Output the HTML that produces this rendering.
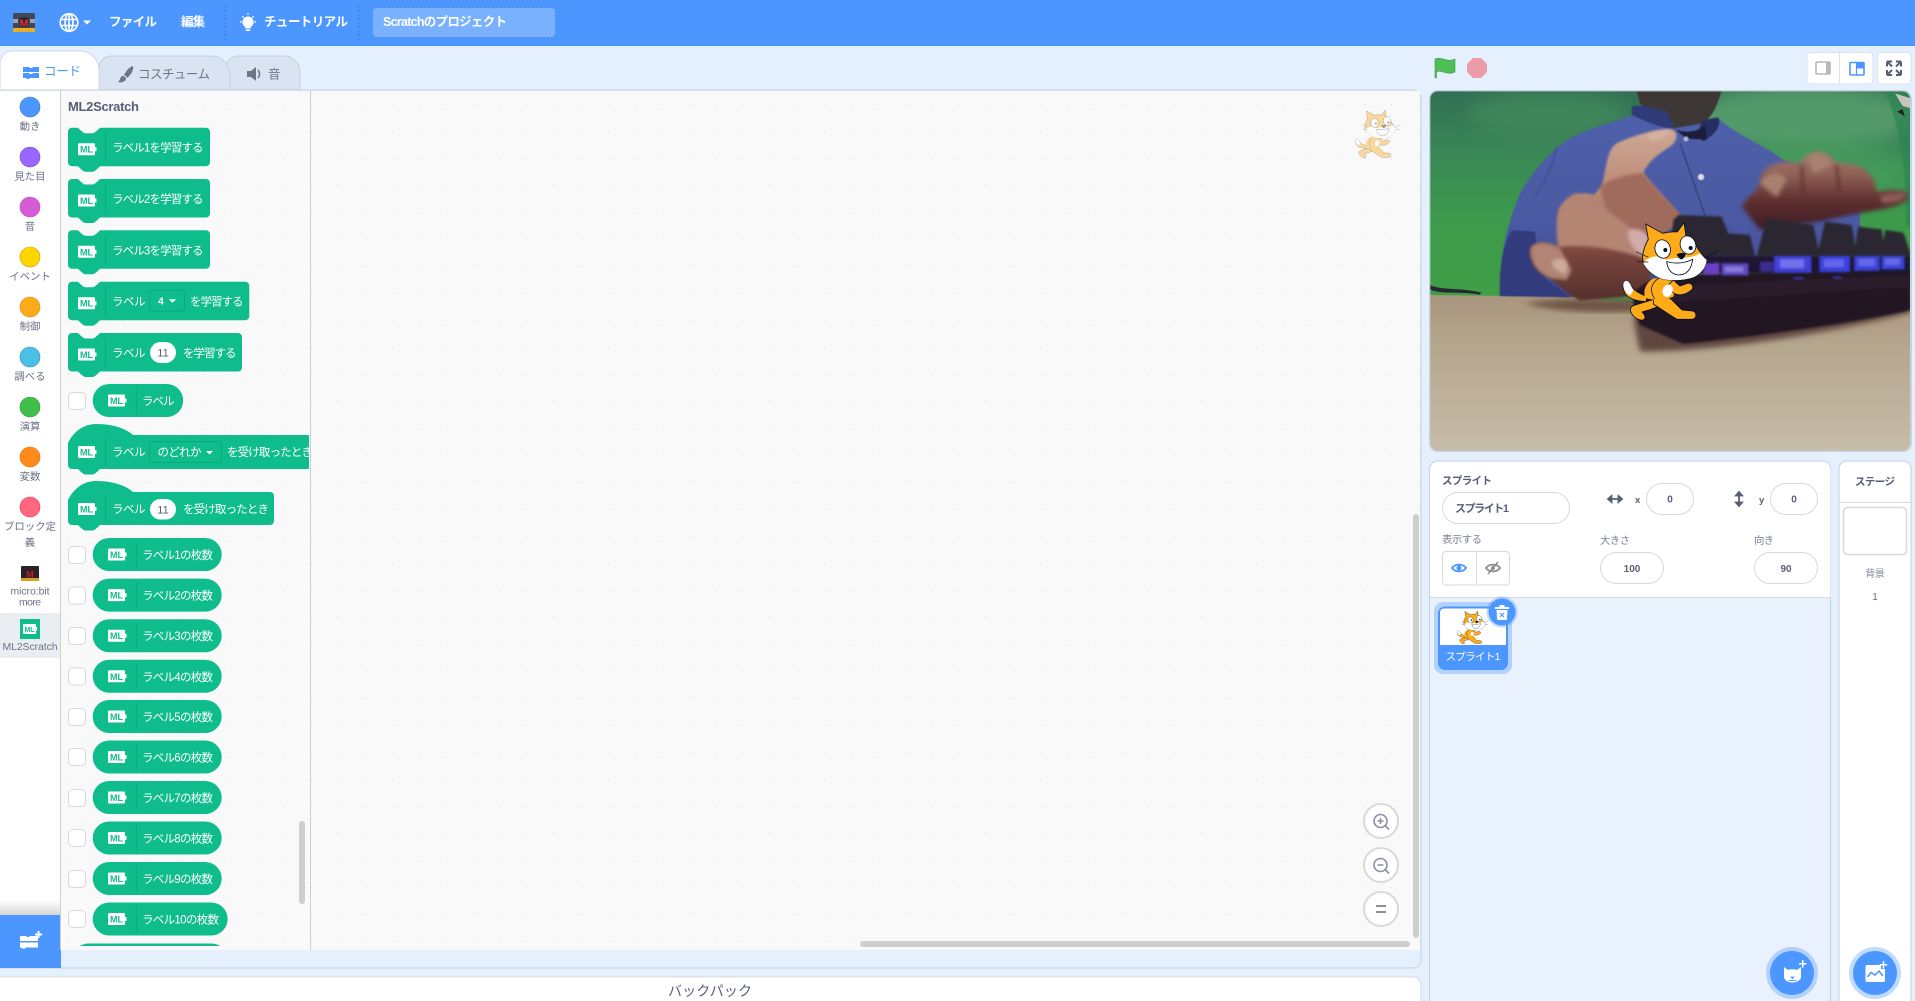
<!DOCTYPE html>
<html lang="ja"><head><meta charset="utf-8"><title>ML2Scratch</title>
<style>
html,body{margin:0;padding:0;width:1915px;height:1001px;overflow:hidden;background:#e5f0ff}
svg{display:block}
text{font-family:"Liberation Sans","Noto Sans CJK JP",sans-serif}
.w{fill:#fff;font-size:11.5px}
.ml{fill:#0fbd8c;font-size:9px;font-weight:700}
.c{fill:#6b7186;font-size:10.4px;text-anchor:middle}
.g{fill:#575e75;font-size:10.4px}
.inp{fill:#fff;stroke:#d9d9d9;stroke-width:1}
.n{fill:#575e75;font-size:10px;font-weight:700;text-anchor:middle}
.r{fill:#0fbd8c}
.s{stroke:#0ca87c;stroke-width:1}
.box{fill:#fff;stroke:#d9d9d9;stroke-width:1}
</style></head><body>
<svg width="1915" height="1001" viewBox="0 0 1915 1001" xmlns="http://www.w3.org/2000/svg">
<defs>
<pattern id="dots" width="27" height="27" patternUnits="userSpaceOnUse" x="1" y="10"><rect x="13" y="13" width="1.2" height="1.2" fill="#e2e2e2"/></pattern>
<linearGradient id="shade" x1="0" y1="0" x2="0" y2="1"><stop offset="0" stop-color="#fff"/><stop offset="1" stop-color="#d6d6d6"/></linearGradient>
<g id="cat">
<path d="M70 250C75 238 85 240 92 255C100 272 120 282 142 290L138 305C110 303 85 295 75 280C70 270 68 260 70 250Z" fill="#ffab19" stroke="#001026" stroke-width="2.500"/>
<path d="M70 250C75 238 85 240 92 255L100 272L90 287C76 278 68 265 70 250Z" fill="#fff"/>
<path d="M185 290C160 300 125 308 98 318C88 323 90 336 98 345C108 358 128 366 134 356C138 346 126 336 126 336C145 330 178 322 200 308Z" fill="#ffab19" stroke="#001026" stroke-width="2.500"/>
<path d="M160 296C180 280 205 288 218 302L246 330L278 333C292 337 291 357 275 358L232 358C215 350 185 328 160 312Z" fill="#ffab19" stroke="#001026" stroke-width="2.500"/>
<path d="M160 235C140 248 128 268 135 292C150 302 195 302 220 290C228 268 228 248 218 235Z" fill="#ffab19"/>
<path d="M220 240L240 258L262 250C278 248 284 264 272 272C255 285 235 288 222 280L202 258Z" fill="#ffab19" stroke="#001026" stroke-width="2.500"/>
<path d="M176 235C156 248 146 270 164 296" fill="none" stroke="#001026" stroke-width="2.200"/>
<ellipse cx="203" cy="272" rx="15" ry="19" fill="#fff" transform="rotate(20 203 272)"/>
<path d="M137 72L188 100Q212 94 232 96L252 68L258 108Q285 125 296 150L320 180Q316 215 280 232Q240 245 190 238Q150 225 130 190Q122 160 145 118Z" fill="#ffab19" stroke="#001026" stroke-width="2.500"/>
<path d="M130 190C140 172 172 160 200 180C225 168 275 180 298 160L320 180Q316 215 280 232Q240 245 190 238Q150 225 130 190Z" fill="#fff"/>
<ellipse cx="188" cy="147" rx="23" ry="28" fill="#fff" stroke="#001026" stroke-width="2.500" transform="rotate(-15 188 147)"/>
<ellipse cx="264" cy="135" rx="23" ry="28" fill="#fff" stroke="#001026" stroke-width="2.500" transform="rotate(-20 264 135)"/>
<circle cx="196" cy="150" r="6" fill="#001026"/><circle cx="272" cy="144" r="6" fill="#001026"/>
<path d="M230 163Q245 155 258 162Q250 180 243 178Q235 175 230 163Z" fill="#001026"/>
<path d="M200 185Q240 196 278 178Q272 225 235 225Q205 222 200 185Z" fill="#fff" stroke="#001026" stroke-width="2.500"/>
<path d="M108 155L145 172M112 185L145 186M320 170L350 155M320 188L345 189" stroke="#001026" stroke-width="2" fill="none"/>
</g>
<filter id="bl0" x="-5%" y="-5%" width="110%" height="110%"><feGaussianBlur stdDeviation="1.500"/></filter>
<filter id="bl" x="-5%" y="-5%" width="110%" height="110%"><feGaussianBlur stdDeviation="3"/></filter>
<filter id="bl4" x="-5%" y="-5%" width="110%" height="110%"><feGaussianBlur stdDeviation="5"/></filter>
<filter id="bl1" x="-10%" y="-10%" width="120%" height="120%"><feGaussianBlur stdDeviation="6"/></filter>
<filter id="bl2" x="-10%" y="-10%" width="120%" height="120%"><feGaussianBlur stdDeviation="9"/></filter>
<filter id="bl3" x="-30%" y="-30%" width="160%" height="160%"><feGaussianBlur stdDeviation="28"/></filter>
<linearGradient id="gBg" gradientUnits="userSpaceOnUse" x1="0" y1="152" x2="0" y2="780"><stop offset="0" stop-color="#326f54"/><stop offset=".3" stop-color="#3a8757"/><stop offset=".6" stop-color="#3d9a4c"/><stop offset="1" stop-color="#409e46"/></linearGradient>
<linearGradient id="gTb" gradientUnits="userSpaceOnUse" x1="0" y1="765" x2="0" y2="1234"><stop offset="0" stop-color="#a8957d"/><stop offset=".35" stop-color="#b6a78f"/><stop offset="1" stop-color="#c7bca9"/></linearGradient>
<linearGradient id="gSh" gradientUnits="userSpaceOnUse" x1="0" y1="220" x2="0" y2="770"><stop offset="0" stop-color="#4f5fa9"/><stop offset=".6" stop-color="#4b5aa3"/><stop offset="1" stop-color="#3c4887"/></linearGradient>
<linearGradient id="gH" gradientUnits="userSpaceOnUse" x1="0" y1="270" x2="0" y2="780"><stop offset="0" stop-color="#cfa794"/><stop offset=".3" stop-color="#bd8f7a"/><stop offset=".55" stop-color="#a87363"/><stop offset=".72" stop-color="#7b463e"/><stop offset="1" stop-color="#55302c"/></linearGradient>
<linearGradient id="gR" gradientUnits="userSpaceOnUse" x1="0" y1="320" x2="0" y2="570"><stop offset="0" stop-color="#ab8476"/><stop offset=".35" stop-color="#8d5e54"/><stop offset=".65" stop-color="#5f2e2f"/><stop offset="1" stop-color="#3d1e26"/></linearGradient>
<clipPath id="stageClip"><rect x="29" y="152" width="1443" height="1082" rx="24"/></clipPath>
<clipPath id="palClip"><rect x="61" y="91" width="248" height="855"/></clipPath>
</defs>

<rect width="1915" height="1001" fill="#e5f0ff"/>

<!-- header -->
<rect width="1915" height="46" fill="#4c97ff"/>
<g>
<rect x="13" y="13" width="22" height="19" rx="2" fill="#414858"/>
<rect x="13" y="28" width="22" height="4" fill="#e8b022"/>
<rect x="13" y="19" width="5" height="4" fill="#9aa2b3"/><rect x="30" y="19" width="5" height="4" fill="#9aa2b3"/>
<rect x="19.500" y="17.500" width="9" height="9.500" fill="#20242e"/>
<text x="24" y="26.500" text-anchor="middle" font-size="10.500" font-weight="700" fill="#ef2b34">M</text>
</g>
<g fill="none" stroke="#fff" stroke-width="1.600">
<circle cx="69" cy="22.500" r="8.800"/><ellipse cx="69" cy="22.500" rx="4" ry="8.800"/><path d="M69 14V31M60.500 19.500H77.500M60.500 25.500H77.500"/>
</g>
<path d="M83 20.500H91L87 24.500Z" fill="#fff"/>
<text x="109" y="26" fill="#fff" font-size="12.500" font-weight="700" textLength="48">ファイル</text>
<text x="181" y="26" fill="#fff" font-size="12.500" font-weight="700" textLength="24">編集</text>
<path d="M225 6V40M359 6V40" stroke="#3373cc" stroke-width="1" stroke-dasharray="2 2" opacity=".7"/>
<g fill="#fff">
<path d="M248 16.500a5.600 5.600 0 0 1 3.400 10c-.8.700-1 1.300-1 2h-4.800c0-.7-.2-1.300-1-2a5.600 5.600 0 0 1 3.400-10z"/><rect x="245.500" y="29.500" width="5" height="1.500" rx=".7"/>
<path d="M248 12.800v1.800M240 22h1.800M254.200 22h1.800M242.300 16.300l1.300 1.300M253.700 16.300l-1.300 1.300" stroke="#fff" stroke-width="1.200"/>
</g>
<text x="264" y="26" fill="#fff" font-size="12.500" font-weight="700" textLength="84">チュートリアル</text>
<rect x="372.500" y="7.500" width="183" height="30" rx="4" fill="#fff" fill-opacity=".25" stroke="#3373cc" stroke-opacity=".6" stroke-dasharray="2 2"/>
<text x="383" y="26" fill="#fff" font-size="12.500" font-weight="700" textLength="124">Scratchのプロジェクト</text>

<!-- tabs -->
<path d="M226 90V68a12 12 0 0 1 12-12h46a16 16 0 0 1 16 16v18z" fill="#d9e3f2" stroke="#c4cfdf"/>
<path d="M99 90V68a12 12 0 0 1 12-12h100a19 19 0 0 1 19 19v15z" fill="#d9e3f2" stroke="#c4cfdf"/>
<path d="M0 91V63a12 12 0 0 1 12-12h68a19 19 0 0 1 19 19v21z" fill="#fff" stroke="#d0d9e6"/>
<g fill="#4c97ff"><path d="M23 67h6l1 1h2l1-1h6v5H23zM23 73h6l1 1h2l1-1h6v5h-9l-1 1h-2l-1-1h-3z"/></g>
<text x="44" y="75.500" fill="#4c97ff" font-size="12.500" textLength="37">コード</text>
<path d="M133 66c-4 1-7 5-9 9 2 1 3 2 3 3 4-3 7-8 6-12zM118 82c3 1 7 0 8-3 0-2-2-3-4-3-2 1-2 5-4 6z" fill="#6f7585"/>
<text x="138" y="78.500" fill="#6f7585" font-size="12.500" textLength="72">コスチューム</text>
<path d="M247 71h4l5-4v14l-5-4h-4z" fill="#6f7585"/><path d="M258 70c2 2 2 6 0 8" fill="none" stroke="#6f7585" stroke-width="1.500"/>
<text x="268" y="78.500" fill="#6f7585" font-size="12.500" textLength="12.500">音</text>

<!-- code panel -->
<path d="M-5 90H1413a8 8 0 0 1 8 8V960a8 8 0 0 1-8 8H-5z" fill="#e5f0ff" stroke="#c4cfdf"/>
<rect x="0" y="91" width="60" height="824" fill="#fff"/>
<rect x="0" y="900" width="60" height="15" fill="url(#shade)"/>
<rect x="0" y="915" width="61" height="53" fill="#4c97ff"/>
<rect x="61" y="91" width="1359" height="859" fill="#f9f9f9"/>
<rect x="61" y="91" width="1359" height="859" fill="url(#dots)"/>
<path d="M60.500 91V950M310.500 91V950" stroke="#cfcfcf"/>
<g fill="#fff"><path d="M20 936h6l1 1h2l1-1h8v5H20zM20 942.500h18v5H26l-1 1h-3l-1-1h-1z"/><path d="M37.500 931h2v2.500H42v2h-2.500V938h-2v-2.500H35v-2h2.500z"/></g>

<!-- categories -->
<circle cx="30" cy="107" r="10" fill="#4c97ff" stroke="#3373cc" stroke-width=".6"/><text class="c" x="30" y="130">動き</text>
<circle cx="30" cy="157" r="10" fill="#9966ff" stroke="#774dcb" stroke-width=".6"/><text class="c" x="30" y="180">見た目</text>
<circle cx="30" cy="207" r="10" fill="#d65cd6" stroke="#bd42bd" stroke-width=".6"/><text class="c" x="30" y="230">音</text>
<circle cx="30" cy="257" r="10" fill="#ffd500" stroke="#cc9900" stroke-width=".6"/><text class="c" x="30" y="280">イベント</text>
<circle cx="30" cy="307" r="10" fill="#ffab19" stroke="#cf8b17" stroke-width=".6"/><text class="c" x="30" y="330">制御</text>
<circle cx="30" cy="357" r="10" fill="#4cbfe6" stroke="#2e8eb8" stroke-width=".6"/><text class="c" x="30" y="380">調べる</text>
<circle cx="30" cy="407" r="10" fill="#40bf4a" stroke="#389438" stroke-width=".6"/><text class="c" x="30" y="430">演算</text>
<circle cx="30" cy="457" r="10" fill="#ff8c1a" stroke="#db6e00" stroke-width=".6"/><text class="c" x="30" y="480">変数</text>
<circle cx="30" cy="507" r="10" fill="#ff6680" stroke="#ff3355" stroke-width=".6"/><text class="c" x="30" y="530" textLength="52">ブロック定</text><text class="c" x="30" y="546">義</text>
<g>
<rect x="21" y="566" width="18" height="15" rx="1" fill="#2a2226"/><rect x="21" y="578" width="18" height="3" fill="#d8a22a"/>
<text x="30" y="577.500" text-anchor="middle" font-size="9" font-weight="700" fill="#c8202a">M</text>
</g>
<text class="c" x="30" y="594.500" textLength="39">micro:bit</text><text class="c" x="30" y="605.500" textLength="22">more</text>
<rect x="0" y="613" width="60" height="45" fill="#e9eef2"/>
<rect x="20" y="619" width="20" height="20" fill="#0fbd8c"/>
<g transform="translate(23,624)"><rect width="13" height="10" rx="1" fill="#fff"/><rect x="13" y="3" width="1" height="4" fill="#fff"/><text x="1.500" y="8" fill="#0fbd8c" style="font-size:7px;font-weight:700" textLength="10">ML</text></g>
<text class="c" x="30" y="650" textLength="55">ML2Scratch</text>

<!-- palette -->
<text x="68" y="111" fill="#575e75" font-size="13" font-weight="700" textLength="71">ML2Scratch</text>
<g clip-path="url(#palClip)">
<!-- stack blocks -->
<g transform="translate(68,127.700)"><path class="r" d="M0 4A4 4 0 0 1 4 0H9C10.500 0 11 1 12 2L15 4.500C16 5.300 16.500 5.500 18 5.500H24C25.500 5.500 26 5.300 27 4.500L30 2C31 1 31.500 0 33 0H138A4 4 0 0 1 142 4V34.500A4 4 0 0 1 138 38.500H33C31.500 38.500 31 39.500 30 40.500L27 43C26 43.800 25.500 44 24 44H18C16.500 44 16 43.800 15 43L12 40.500C11 39.500 10.500 38.500 9 38.500H4A4 4 0 0 1 0 34.500Z"/><path class="s" d="M37.500 5V34"/><g transform="translate(10,15.500)"><rect width="17" height="12" rx="1" fill="#fff"/><rect x="17" y="4" width="1.500" height="4" fill="#fff"/><text class="ml" x="2" y="9.500" textLength="13">ML</text></g><text class="w" x="44" y="24" textLength="91.500">ラベル1を学習する</text></g>

<g transform="translate(68,179)"><path class="r" d="M0 4A4 4 0 0 1 4 0H9C10.500 0 11 1 12 2L15 4.500C16 5.300 16.500 5.500 18 5.500H24C25.500 5.500 26 5.300 27 4.500L30 2C31 1 31.500 0 33 0H138A4 4 0 0 1 142 4V34.500A4 4 0 0 1 138 38.500H33C31.500 38.500 31 39.500 30 40.500L27 43C26 43.800 25.500 44 24 44H18C16.500 44 16 43.800 15 43L12 40.500C11 39.500 10.500 38.500 9 38.500H4A4 4 0 0 1 0 34.500Z"/><path class="s" d="M37.500 5V34"/><g transform="translate(10,15.500)"><rect width="17" height="12" rx="1" fill="#fff"/><rect x="17" y="4" width="1.500" height="4" fill="#fff"/><text class="ml" x="2" y="9.500" textLength="13">ML</text></g><text class="w" x="44" y="24" textLength="91.500">ラベル2を学習する</text></g>

<g transform="translate(68,230.300)"><path class="r" d="M0 4A4 4 0 0 1 4 0H9C10.500 0 11 1 12 2L15 4.500C16 5.300 16.500 5.500 18 5.500H24C25.500 5.500 26 5.300 27 4.500L30 2C31 1 31.500 0 33 0H138A4 4 0 0 1 142 4V34.500A4 4 0 0 1 138 38.500H33C31.500 38.500 31 39.500 30 40.500L27 43C26 43.800 25.500 44 24 44H18C16.500 44 16 43.800 15 43L12 40.500C11 39.500 10.500 38.500 9 38.500H4A4 4 0 0 1 0 34.500Z"/><path class="s" d="M37.500 5V34"/><g transform="translate(10,15.500)"><rect width="17" height="12" rx="1" fill="#fff"/><rect x="17" y="4" width="1.500" height="4" fill="#fff"/><text class="ml" x="2" y="9.500" textLength="13">ML</text></g><text class="w" x="44" y="24" textLength="91.500">ラベル3を学習する</text></g>

<g transform="translate(68,281.700)"><path class="r" d="M0 4A4 4 0 0 1 4 0H9C10.500 0 11 1 12 2L15 4.500C16 5.300 16.500 5.500 18 5.500H24C25.500 5.500 26 5.300 27 4.500L30 2C31 1 31.500 0 33 0H177.300A4 4 0 0 1 181.300 4V34.500A4 4 0 0 1 177.300 38.500H33C31.500 38.500 31 39.500 30 40.500L27 43C26 43.800 25.500 44 24 44H18C16.500 44 16 43.800 15 43L12 40.500C11 39.500 10.500 38.500 9 38.500H4A4 4 0 0 1 0 34.500Z"/><path class="s" d="M37.500 5V34"/><g transform="translate(10,15.500)"><rect width="17" height="12" rx="1" fill="#fff"/><rect x="17" y="4" width="1.500" height="4" fill="#fff"/><text class="ml" x="2" y="9.500" textLength="13">ML</text></g><text class="w" x="44" y="24" textLength="33.500">ラベル</text>
<rect x="81.500" y="8.500" width="35" height="21" rx="3.500" fill="#0fbd8c" stroke="#0ca87c"/><text class="w" x="90" y="23" font-weight="700" style="font-size:10.500px">4</text><path d="M101 17.500H108L104.500 21Z" fill="#fff"/><text class="w" x="122" y="24" textLength="53.500">を学習する</text></g>

<g transform="translate(68,333)"><path class="r" d="M0 4A4 4 0 0 1 4 0H9C10.500 0 11 1 12 2L15 4.500C16 5.300 16.500 5.500 18 5.500H24C25.500 5.500 26 5.300 27 4.500L30 2C31 1 31.500 0 33 0H170A4 4 0 0 1 174 4V34.500A4 4 0 0 1 170 38.500H33C31.500 38.500 31 39.500 30 40.500L27 43C26 43.800 25.500 44 24 44H18C16.500 44 16 43.800 15 43L12 40.500C11 39.500 10.500 38.500 9 38.500H4A4 4 0 0 1 0 34.500Z"/><path class="s" d="M37.500 5V34"/><g transform="translate(10,15.500)"><rect width="17" height="12" rx="1" fill="#fff"/><rect x="17" y="4" width="1.500" height="4" fill="#fff"/><text class="ml" x="2" y="9.500" textLength="13">ML</text></g><text class="w" x="44" y="24" textLength="33.500">ラベル</text>
<rect x="82" y="9" width="26" height="21" rx="10.500" fill="#fff"/><text x="95" y="23.500" text-anchor="middle" fill="#575e75" font-size="11">11</text><text class="w" x="115" y="24" textLength="53.500">を学習する</text></g>

<!-- ラベル reporter -->
<rect class="box" x="68.500" y="392.500" width="17" height="17" rx="4"/>
<g transform="translate(92.700,384)"><rect class="r" width="90.500" height="33" rx="16.500"/><path class="s" d="M43.500 3V30"/><g transform="translate(15.300,10.500)"><rect width="17" height="12" rx="1" fill="#fff"/><rect x="17" y="4" width="1.500" height="4" fill="#fff"/><text class="ml" x="2" y="9.500" textLength="13">ML</text></g><text class="w" x="49.300" y="21" textLength="32.500">ラベル</text></g>

<!-- hats -->
<g transform="translate(68,435)"><path class="r" d="M0 8C6 -4 16 -11 28 -11C42 -11 56 -8 65 0H300V34H33C31.500 34 31 35 30 36L27 38.500C26 39.300 25.500 39.500 24 39.500H18C16.500 39.500 16 39.300 15 38.500L12 36C11 35 10.500 34 9 34H4A4 4 0 0 1 0 30Z"/><path class="s" d="M37.500 3V30"/><g transform="translate(10,11)"><rect width="17" height="12" rx="1" fill="#fff"/><rect x="17" y="4" width="1.500" height="4" fill="#fff"/><text class="ml" x="2" y="9.500" textLength="13">ML</text></g><text class="w" x="44" y="21" textLength="33.500">ラベル</text>
<rect x="81.500" y="6.500" width="72" height="21" rx="3.500" fill="#0fbd8c" stroke="#0ca87c"/><text class="w" x="89.500" y="21" textLength="44">のどれか</text><path d="M138 16H145L141.500 19.500Z" fill="#fff"/><text class="w" x="159" y="21" textLength="86">を受け取ったとき</text></g>

<g transform="translate(68,492)"><path class="r" d="M0 8C6 -4 16 -11 28 -11C42 -11 56 -8 65 0H202A4 4 0 0 1 206 4V29A4 4 0 0 1 202 33H33C31.500 33 31 34 30 35L27 37.500C26 38.300 25.500 38.500 24 38.500H18C16.500 38.500 16 38.300 15 37.500L12 35C11 34 10.500 33 9 33H4A4 4 0 0 1 0 29Z"/><path class="s" d="M37.500 3V30"/><g transform="translate(10,11)"><rect width="17" height="12" rx="1" fill="#fff"/><rect x="17" y="4" width="1.500" height="4" fill="#fff"/><text class="ml" x="2" y="9.500" textLength="13">ML</text></g><text class="w" x="44" y="21" textLength="33.500">ラベル</text>
<rect x="82" y="7" width="26" height="20.500" rx="10.200" fill="#fff"/><text x="95" y="21.500" text-anchor="middle" fill="#575e75" font-size="11">11</text><text class="w" x="115" y="21" textLength="86">を受け取ったとき</text></g>

<!-- count reporters -->
<rect class="box" x="68.500" y="546.500" width="17" height="17" rx="4"/>
<g transform="translate(92.700,538)"><rect class="r" width="129" height="33" rx="16.500"/><path class="s" d="M43.500 3V30"/><g transform="translate(15.300,10.500)"><rect width="17" height="12" rx="1" fill="#fff"/><rect x="17" y="4" width="1.500" height="4" fill="#fff"/><text class="ml" x="2" y="9.500" textLength="13">ML</text></g><text class="w" x="49.300" y="21" textLength="71">ラベル1の枚数</text></g>
<rect class="box" x="68.500" y="587" width="17" height="17" rx="4"/>
<g transform="translate(92.700,578.600)"><rect class="r" width="129" height="33" rx="16.500"/><path class="s" d="M43.500 3V30"/><g transform="translate(15.300,10.500)"><rect width="17" height="12" rx="1" fill="#fff"/><rect x="17" y="4" width="1.500" height="4" fill="#fff"/><text class="ml" x="2" y="9.500" textLength="13">ML</text></g><text class="w" x="49.300" y="21" textLength="71">ラベル2の枚数</text></g>
<rect class="box" x="68.500" y="627.500" width="17" height="17" rx="4"/>
<g transform="translate(92.700,619.200)"><rect class="r" width="129" height="33" rx="16.500"/><path class="s" d="M43.500 3V30"/><g transform="translate(15.300,10.500)"><rect width="17" height="12" rx="1" fill="#fff"/><rect x="17" y="4" width="1.500" height="4" fill="#fff"/><text class="ml" x="2" y="9.500" textLength="13">ML</text></g><text class="w" x="49.300" y="21" textLength="71">ラベル3の枚数</text></g>
<rect class="box" x="68.500" y="668" width="17" height="17" rx="4"/>
<g transform="translate(92.700,659.800)"><rect class="r" width="129" height="33" rx="16.500"/><path class="s" d="M43.500 3V30"/><g transform="translate(15.300,10.500)"><rect width="17" height="12" rx="1" fill="#fff"/><rect x="17" y="4" width="1.500" height="4" fill="#fff"/><text class="ml" x="2" y="9.500" textLength="13">ML</text></g><text class="w" x="49.300" y="21" textLength="71">ラベル4の枚数</text></g>
<rect class="box" x="68.500" y="708.500" width="17" height="17" rx="4"/>
<g transform="translate(92.700,700)"><rect class="r" width="129" height="33" rx="16.500"/><path class="s" d="M43.500 3V30"/><g transform="translate(15.300,10.500)"><rect width="17" height="12" rx="1" fill="#fff"/><rect x="17" y="4" width="1.500" height="4" fill="#fff"/><text class="ml" x="2" y="9.500" textLength="13">ML</text></g><text class="w" x="49.300" y="21" textLength="71">ラベル5の枚数</text></g>
<rect class="box" x="68.500" y="748.500" width="17" height="17" rx="4"/>
<g transform="translate(92.700,740.500)"><rect class="r" width="129" height="33" rx="16.500"/><path class="s" d="M43.500 3V30"/><g transform="translate(15.300,10.500)"><rect width="17" height="12" rx="1" fill="#fff"/><rect x="17" y="4" width="1.500" height="4" fill="#fff"/><text class="ml" x="2" y="9.500" textLength="13">ML</text></g><text class="w" x="49.300" y="21" textLength="71">ラベル6の枚数</text></g>
<rect class="box" x="68.500" y="789.500" width="17" height="17" rx="4"/>
<g transform="translate(92.700,781)"><rect class="r" width="129" height="33" rx="16.500"/><path class="s" d="M43.500 3V30"/><g transform="translate(15.300,10.500)"><rect width="17" height="12" rx="1" fill="#fff"/><rect x="17" y="4" width="1.500" height="4" fill="#fff"/><text class="ml" x="2" y="9.500" textLength="13">ML</text></g><text class="w" x="49.300" y="21" textLength="71">ラベル7の枚数</text></g>
<rect class="box" x="68.500" y="829.500" width="17" height="17" rx="4"/>
<g transform="translate(92.700,821.500)"><rect class="r" width="129" height="33" rx="16.500"/><path class="s" d="M43.500 3V30"/><g transform="translate(15.300,10.500)"><rect width="17" height="12" rx="1" fill="#fff"/><rect x="17" y="4" width="1.500" height="4" fill="#fff"/><text class="ml" x="2" y="9.500" textLength="13">ML</text></g><text class="w" x="49.300" y="21" textLength="71">ラベル8の枚数</text></g>
<rect class="box" x="68.500" y="870.500" width="17" height="17" rx="4"/>
<g transform="translate(92.700,862)"><rect class="r" width="129" height="33" rx="16.500"/><path class="s" d="M43.500 3V30"/><g transform="translate(15.300,10.500)"><rect width="17" height="12" rx="1" fill="#fff"/><rect x="17" y="4" width="1.500" height="4" fill="#fff"/><text class="ml" x="2" y="9.500" textLength="13">ML</text></g><text class="w" x="49.300" y="21" textLength="71">ラベル9の枚数</text></g>
<rect class="box" x="68.500" y="910.500" width="17" height="17" rx="4"/>
<g transform="translate(92.700,902.500)"><rect class="r" width="135" height="33" rx="16.500"/><path class="s" d="M43.500 3V30"/><g transform="translate(15.300,10.500)"><rect width="17" height="12" rx="1" fill="#fff"/><rect x="17" y="4" width="1.500" height="4" fill="#fff"/><text class="ml" x="2" y="9.500" textLength="13">ML</text></g><text class="w" x="49.300" y="21" textLength="77">ラベル10の枚数</text></g>
<rect class="r" x="72" y="943.500" width="156" height="33" rx="16.500"/>
</g>
<rect x="299" y="821" width="6" height="83" rx="3" fill="#cecece"/>

<!-- workspace decorations -->
<use href="#cat" transform="translate(1344,99) scale(.163)" opacity=".42"/>
<rect x="1413" y="514" width="6" height="424" rx="3" fill="#cecece"/>
<rect x="860" y="941" width="550" height="6" rx="3" fill="#cecece"/>
<g fill="#fff" stroke="#d9d9d9" stroke-width="2">
<circle cx="1381" cy="821" r="17"/><circle cx="1381" cy="865" r="17"/><circle cx="1381" cy="909" r="17"/>
</g>
<g fill="none" stroke="#8a8fa3" stroke-width="1.600">
<circle cx="1380.500" cy="821" r="6.500"/><path d="M1385.500 826L1389 829.500M1377.500 821H1383.500M1380.500 818V824"/>
<circle cx="1380.500" cy="865" r="6.500"/><path d="M1385.500 870L1389 873.500M1377.500 865H1383.500"/>
</g>
<rect x="1376" y="905" width="10" height="2" fill="#8a8fa3"/><rect x="1376" y="911" width="10" height="2" fill="#8a8fa3"/>

<!-- backpack -->
<path d="M-5 977H1413a8 8 0 0 1 8 8V1010H-5z" fill="#fff" stroke="#d9d9d9"/>
<text x="668" y="996" fill="#575e75" font-size="14" textLength="84">バックパック</text>

<!-- stage controls -->
<path d="M1435 59C1441 56 1447 63 1455 59V72C1447 76 1441 69 1436.500 72V78H1435Z" fill="#4cbf56" stroke="#45993d" stroke-width=".6"/>
<path d="M1473 58H1481L1487 64V72L1481 78H1473L1467 72V64Z" fill="#ec9ca6"/>
<path d="M1811 52.500H1869a4 4 0 0 1 4 4V80a4 4 0 0 1-4 4H1811a4 4 0 0 1-4-4V56.500a4 4 0 0 1 4-4z" fill="#fff" stroke="#d9e3f2"/>
<path d="M1839.500 52.500V84" stroke="#d9e3f2"/>
<rect x="1877.500" y="52.500" width="33.500" height="31.500" rx="4" fill="#fff" stroke="#d9e3f2"/>
<rect x="1816" y="62" width="14" height="12" rx="1" fill="none" stroke="#b8b8b8" stroke-width="1.600"/><rect x="1826" y="62" width="4.500" height="12.500" fill="#b8b8b8"/>
<rect x="1850" y="62.500" width="14" height="12.500" rx="1" fill="none" stroke="#4c97ff" stroke-width="1.600"/><rect x="1856.500" y="62" width="8" height="6.500" fill="#4c97ff"/><path d="M1856.500 62V75" stroke="#4c97ff" stroke-width="1.200"/>
<g fill="none" stroke="#575e75" stroke-width="2"><path d="M1887 61.500H1892M1887 61.500V66.500M1887.500 62L1892 66.500M1901 61.500H1896M1901 61.500V66.500M1900.500 62L1896 66.500M1887 75H1892M1887 75V70M1887.500 74.500L1892 70M1901 75H1896M1901 75V70M1900.500 74.500L1896 70"/></g>

<!-- stage photo -->
<rect x="1429.500" y="90.500" width="482" height="361" rx="8" fill="#fff" stroke="#c9d2df"/>
<svg x="1420" y="40" width="495" height="420" viewBox="0 0 1485 1260">
<g clip-path="url(#stageClip)">
<rect x="29" y="152" width="1443" height="700" fill="url(#gBg)"/>
<ellipse cx="1150" cy="230" rx="340" ry="100" fill="#5ba270" opacity=".8" filter="url(#bl3)"/>
<ellipse cx="380" cy="220" rx="240" ry="70" fill="#468f5e" opacity=".6" filter="url(#bl3)"/>
<ellipse cx="1200" cy="400" rx="280" ry="90" fill="#479f5c" opacity=".7" filter="url(#bl3)"/>
<path d="M1395 152C1440 260 1462 400 1458 560L1472 560V152Z" fill="#2f8552" opacity=".75" filter="url(#bl0)"/>
<path d="M1425 160L1472 175V205L1448 198Z" fill="#c9c4be"/><path d="M1432 215l16 -8 6 22z" fill="#222"/>
<path d="M29 765L450 770L640 790L800 860L1472 800V1234H29Z" fill="url(#gTb)"/>
<path d="M29 735C70 752 120 742 185 758L178 764C120 752 70 765 29 748Z" fill="#262a30"/>
<g filter="url(#bl0)">
<path d="M240 768C236 660 258 560 300 460C340 390 400 320 470 285C540 255 600 240 640 225L900 240C960 290 1040 320 1090 360L1320 440L1320 600L1000 670L450 772Z" fill="url(#gSh)"/>
<path d="M240 768C236 690 248 620 275 570L345 575L350 610L330 640L380 720L450 772Z" fill="#303b7c"/>
<path d="M410 320C400 370 380 420 345 470" stroke="#414f96" stroke-width="5" fill="none"/>
<path d="M650 152H905C890 200 880 225 850 250L760 265C720 240 680 215 660 190Z" fill="#3d3936"/>
<path d="M635 200C660 190 700 205 740 215L765 265C730 270 670 240 635 225Z" fill="#2f3a78"/>
<path d="M850 240L895 232C905 255 890 280 850 305C835 290 830 265 850 240Z" fill="#252e62"/>
<path d="M765 268C800 280 835 275 855 255L860 300L800 296Z" fill="#1c1f3c"/>
<path d="M780 310L858 535" stroke="#283262" stroke-width="3" fill="none"/>
<circle cx="798" cy="297" r="7" fill="#b4b7d8"/><circle cx="843" cy="411" r="9" fill="#dde0ec"/>
</g>
<path d="M640 835L660 935C900 935 1250 875 1472 818V770L700 800Z" fill="#5e463f" filter="url(#bl2)"/>
<path d="M315 790C400 775 520 775 650 780L640 815C540 820 400 815 315 790Z" fill="#6e5547" filter="url(#bl2)"/>
<path d="M640 730L860 700L1472 690V810C1300 850 1000 890 790 912L660 855L640 800Z" fill="#231620" filter="url(#bl)"/>
<path d="M680 740L1472 705V740L720 790Z" fill="#2c1d2b" filter="url(#bl)"/>
<g filter="url(#bl)">
<path d="M545 440C560 380 560 330 590 310C640 285 720 265 755 268C775 275 775 300 750 320C710 345 680 370 670 400C700 440 750 490 780 525L760 560L700 600L690 720L620 770L480 782C440 760 410 730 390 715C350 700 325 660 330 625C345 600 385 605 415 620C420 590 405 540 415 510C430 470 490 450 520 465Z" fill="url(#gH)"/>
</g>
<g filter="url(#bl4)">
<path d="M540 440C580 410 640 400 670 400C700 440 750 490 780 525L745 565L650 585L560 510Z" fill="#a06b5c"/>
<path d="M415 620C405 560 410 500 460 462C490 455 530 490 560 510L660 585L672 655C600 630 500 610 420 620Z" fill="#b58573"/>
<path d="M333 625C345 603 385 605 420 625L455 690L440 720L395 715C350 700 328 660 333 625Z" fill="#b18474"/>
<path d="M625 572C640 562 670 570 688 590L670 650C640 630 622 600 625 572Z" fill="#d2aca9"/>
<path d="M395 665C410 652 438 655 443 670L436 703C415 695 398 685 395 665Z" fill="#ceaa9c"/>
<path d="M680 285C710 272 745 268 752 274C742 290 715 298 692 303Z" fill="#d6b3a0"/>
</g>
<g filter="url(#bl1)">
<path d="M965 500C985 465 1010 460 1020 420C1030 370 1080 360 1140 370C1160 325 1220 320 1250 370C1290 365 1350 380 1365 430L1370 455C1400 450 1450 445 1465 460C1470 485 1440 495 1400 505L1290 525L1200 545L1020 570Z" fill="url(#gR)"/>
<path d="M1145 375L1150 460M1250 375L1258 455" stroke="#5b2e2c" stroke-width="9" fill="none"/>
<path d="M1020 430C1040 395 1085 390 1100 420L1070 470Z" fill="#a8806f"/>
<path d="M1165 350C1190 335 1225 345 1235 375L1180 400Z" fill="#a8826f"/>
<path d="M1380 470C1410 462 1445 458 1460 465L1440 482L1390 490Z" fill="#8f5f58"/>
</g>
<g fill="#2b2730" filter="url(#bl)">
<path d="M760 540L775 525L905 530L925 580L990 585L1005 650L750 650Z"/>
<path d="M1010 650L1040 535L1180 555L1200 650Z"/>
<path d="M1190 650L1215 545L1295 555L1312 650Z"/>
<path d="M1300 650L1315 560L1385 568L1398 650Z"/>
<path d="M1385 650L1395 570L1450 578L1472 640V650Z"/>
</g>
<rect x="840" y="648" width="632" height="52" fill="#1a1330" filter="url(#bl)"/>
<g filter="url(#bl)">
<rect x="850" y="668" width="48" height="36" fill="#6a3fc4"/>
<rect x="905" y="670" width="80" height="36" fill="#5d48c4"/>
<rect x="1062" y="648" width="112" height="50" fill="#3f3fd8"/>
<rect x="1198" y="648" width="92" height="48" fill="#3a40dc"/>
<rect x="1303" y="648" width="76" height="44" fill="#3c42d8"/>
<rect x="1385" y="648" width="68" height="40" fill="#3a44d8"/>
<rect x="1020" y="665" width="40" height="30" fill="#3a2d90"/>
<rect x="1080" y="658" width="72" height="26" fill="#6f72ea"/>
<rect x="1212" y="658" width="60" height="24" fill="#6266ea"/>
<rect x="1315" y="656" width="50" height="22" fill="#6468e8"/>
<rect x="1395" y="655" width="45" height="20" fill="#6468e8"/>
<rect x="915" y="680" width="55" height="16" fill="#8a7ad8"/>
<rect x="1120" y="712" width="30" height="6" fill="#3a3ac0"/><rect x="1240" y="710" width="25" height="6" fill="#3a3ac0"/>
</g>
</g>
<rect x="29.500" y="152.500" width="1442" height="1081" rx="24" fill="none" stroke="#c9d2df" stroke-width="3"/>
</svg>
<use href="#cat" transform="translate(1600,200) scale(.3333)"/>

<!-- sprite panel -->
<path d="M1438 461H1822.500a8 8 0 0 1 8 8V1010H1429.500V469a8 8 0 0 1 8-8z" fill="#e9f1fc" stroke="#c4cfdf"/>
<path d="M1438 461.500H1822.500a8 8 0 0 1 8 8V597H1430V469.500a8 8 0 0 1 8-8z" fill="#fff"/>
<path d="M1430 597.500H1830" stroke="#d5dbe5"/>
<text x="1442" y="484" class="g" style="font-size:10.500px;font-weight:700" textLength="50">スプライト</text>
<rect class="inp" x="1442.500" y="492.500" width="127" height="31" rx="15.500"/>
<text x="1455" y="512" class="g" style="font-size:11px;font-weight:700" textLength="54">スプライト1</text>
<path d="M1608 499H1622M1608 499l3.500-3v6zM1622 499l-3.500-3v6z" stroke="#575e75" stroke-width="1.800" fill="#575e75"/>
<text x="1635" y="503" class="g" style="font-size:9.500px;font-weight:700">x</text>
<rect class="inp" x="1646.500" y="483.500" width="47" height="31" rx="15.500"/><text class="n" x="1670" y="502.500">0</text>
<path d="M1739 492V506M1739 492l-3 3.500h6zM1739 506l-3-3.500h6z" stroke="#575e75" stroke-width="1.800" fill="#575e75"/>
<text x="1759" y="503" class="g" style="font-size:9.500px;font-weight:700">y</text>
<rect class="inp" x="1770.500" y="483.500" width="47" height="31" rx="15.500"/><text class="n" x="1794" y="502.500">0</text>
<text x="1442" y="543" class="g" fill-opacity=".8" textLength="40" style="font-size:10.400px">表示する</text>
<path d="M1446 551.500H1476.500V585H1446a3.500 3.500 0 0 1-3.500-3.500V555a3.500 3.500 0 0 1 3.500-3.500z" fill="#fff" stroke="#d9d9d9"/>
<path d="M1476.500 551.500H1506a3.500 3.500 0 0 1 3.500 3.500V581.500a3.500 3.500 0 0 1-3.500 3.500H1476.500z" fill="#fff" stroke="#d9d9d9"/>
<path d="M1452 568c3-4.500 11-4.500 14 0c-3 4.500-11 4.500-14 0z" fill="none" stroke="#4c97ff" stroke-width="1.800"/><circle cx="1459" cy="568" r="2.500" fill="#4c97ff"/>
<path d="M1486 568c3-4.500 11-4.500 14 0c-3 4.500-11 4.500-14 0z" fill="none" stroke="#8c8c8c" stroke-width="1.800"/><circle cx="1493" cy="568" r="2" fill="#8c8c8c"/><path d="M1488 574L1498 562" stroke="#8c8c8c" stroke-width="1.500"/>
<text x="1600" y="544" class="g" fill-opacity=".8" textLength="30" style="font-size:10.400px">大きさ</text>
<rect class="inp" x="1600.500" y="552.500" width="63" height="31" rx="15.500"/><text class="n" x="1632" y="572">100</text>
<text x="1754" y="544" class="g" fill-opacity=".8" textLength="20" style="font-size:10.400px">向き</text>
<rect class="inp" x="1754.500" y="552.500" width="63" height="31" rx="15.500"/><text class="n" x="1786" y="572">90</text>

<!-- sprite tile -->
<rect x="1434" y="602" width="78" height="72" rx="9" fill="#4c97ff" fill-opacity=".35"/>
<rect x="1438" y="606.500" width="70" height="63.500" rx="7" fill="#4c97ff"/>
<path d="M1440 645V612.500a4 4 0 0 1 4-4h58a4 4 0 0 1 4 4V645z" fill="#fff"/>
<use href="#cat" transform="translate(1449.400,603.400) scale(.112)"/>
<text x="1473" y="660" text-anchor="middle" fill="#fff" font-size="10.500" textLength="55">スプライト1</text>
<circle cx="1502" cy="612" r="15.500" fill="#4c97ff" fill-opacity=".35"/>
<circle cx="1502" cy="612" r="13.500" fill="#4c97ff"/>
<path d="M1495 607H1499L1500 605H1504L1505 607H1509V609H1495ZM1496.500 610H1507.500L1506.800 620H1497.200Z" fill="#fff"/>
<path d="M1500 613L1504 617M1504 613L1500 617" stroke="#4c97ff" stroke-width="1.200"/>

<!-- add sprite -->
<circle cx="1792" cy="973" r="26" fill="#4c97ff" fill-opacity=".35"/><circle cx="1792" cy="973" r="22" fill="#4c97ff"/>
<path d="M1784 967L1788 970C1790 969 1795 969 1797 970L1801 967V977C1801 980 1797 982.500 1792.500 982.500C1788 982.500 1784 980 1784 977Z" fill="#fff"/>
<path d="M1791 977h3l-1.500 1.500zM1788.500 980c2 .8 6 .8 8 0" stroke="#4c97ff" stroke-width=".8" fill="#4c97ff"/>
<path d="M1802 960h1.500v3h3v1.500h-3v3H1802v-3h-3V963h3z" fill="#fff"/>

<!-- stage panel -->
<path d="M1847 461H1903a8 8 0 0 1 8 8V1010H1839V469a8 8 0 0 1 8-8z" fill="#fff" stroke="#c4cfdf"/>
<path d="M1839.500 502.500H1911" stroke="#d9d9d9"/>
<text x="1875" y="485" class="g" style="font-size:10.500px;font-weight:700;text-anchor:middle" textLength="40">ステージ</text>
<rect x="1843.500" y="507.500" width="63" height="47" rx="4" fill="#fff" stroke="#d9d9d9" stroke-width="1.500"/>
<text x="1875" y="577" class="c" fill-opacity=".8" textLength="20">背景</text>
<text x="1875" y="600" class="c" style="font-size:10px">1</text>
<circle cx="1875" cy="973" r="26" fill="#4c97ff" fill-opacity=".35"/><circle cx="1875" cy="973" r="22" fill="#4c97ff"/>
<path d="M1867 965H1881V969H1885V980a2 2 0 0 1-2 2H1867.500a2 2 0 0 1-2-2V967a2 2 0 0 1 1.500-2z" fill="#fff"/>
<path d="M1867.500 977L1871 972.500L1875 975L1879 971L1883 976" fill="none" stroke="#4c97ff" stroke-width="1.500"/>
<path d="M1882.700 961h1.500v3h3v1.500h-3v3h-1.500v-3h-3V964h3z" fill="#fff"/>
</svg>
</body></html>
